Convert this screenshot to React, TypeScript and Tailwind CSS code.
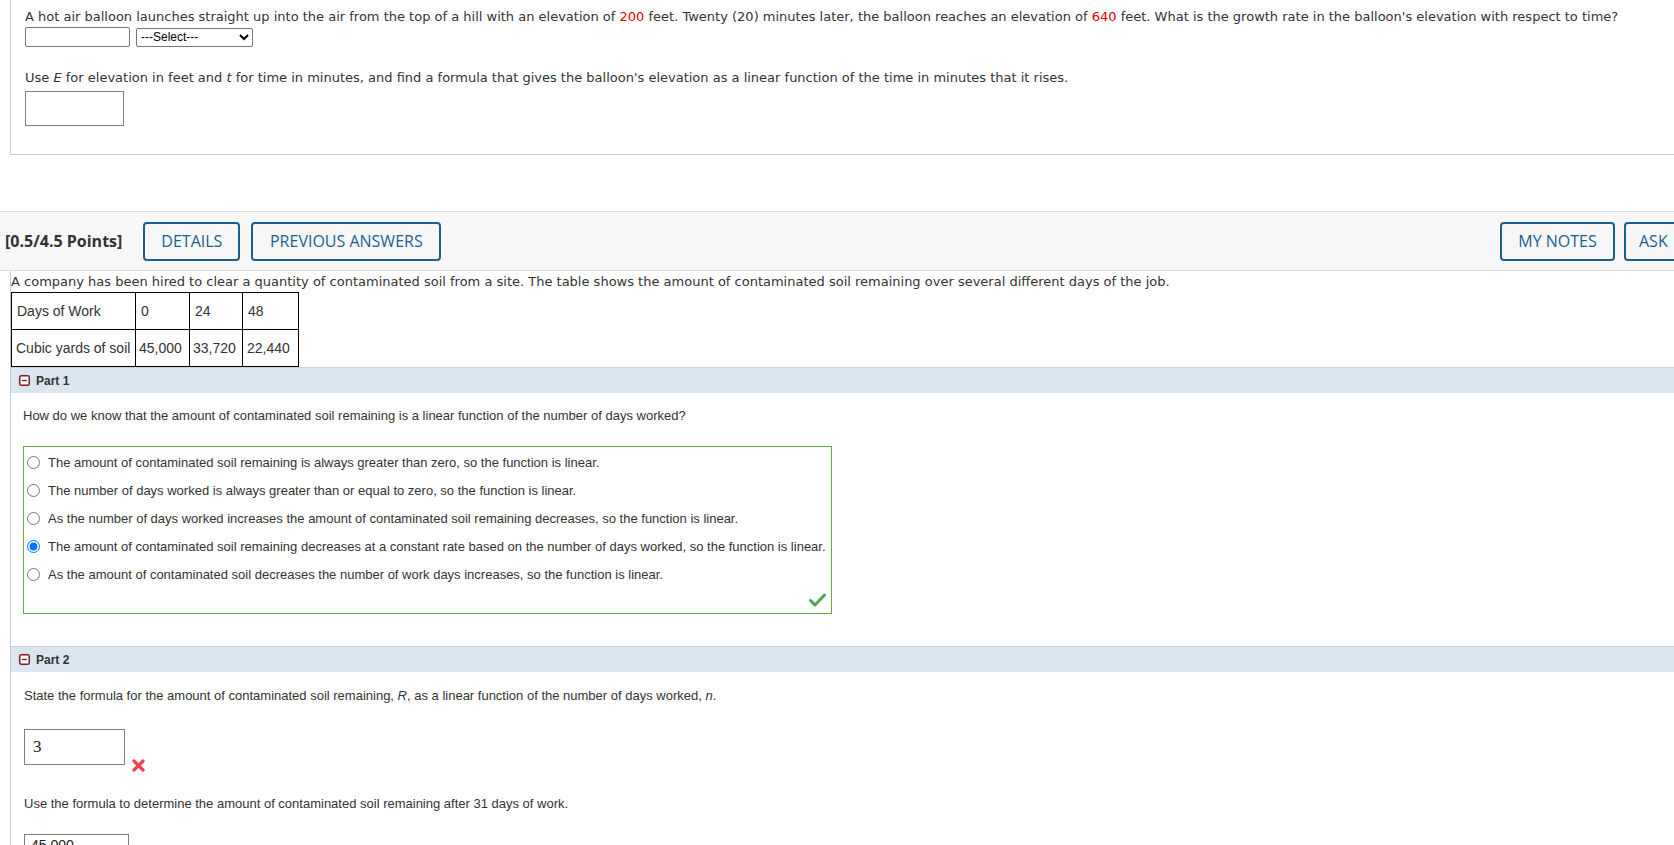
import React from 'react'

const opts = [
  'The amount of contaminated soil remaining is always greater than zero, so the function is linear.',
  'The number of days worked is always greater than or equal to zero, so the function is linear.',
  'As the number of days worked increases the amount of contaminated soil remaining decreases, so the function is linear.',
  'The amount of contaminated soil remaining decreases at a constant rate based on the number of days worked, so the function is linear.',
  'As the amount of contaminated soil decreases the number of work days increases, so the function is linear.',
]

function MinusBox() {
  return (
    <svg width="11" height="11" viewBox="0 0 11 11" className="shrink-0">
      <rect x="0.75" y="0.75" width="9.5" height="9.5" rx="1.5" fill="#fff" stroke="#8a1c1c" strokeWidth="1.5" />
      <rect x="3" y="4.8" width="5" height="1.4" fill="#8a1c1c" />
    </svg>
  )
}

function RedX() {
  return (
    <svg width="15" height="15" viewBox="0 0 15 15">
      <path d="M3 3 L12 12 M12 3 L3 12" stroke="#f0454f" strokeWidth="3.2" strokeLinecap="round" />
    </svg>
  )
}

function Check() {
  return (
    <svg width="17" height="14" viewBox="0 0 17 14">
      <path d="M1.5 7.5 L6 12 L15.5 2" fill="none" stroke="#4fa64a" strokeWidth="3" strokeLinejoin="round" strokeLinecap="round" />
    </svg>
  )
}

function PartHeader({ label }: { label: string }) {
  return (
    <div className="h-[26px] border-t border-[#cfcfcf] bg-[#dae5ef] flex items-center gap-[6px] pl-[8px] text-[12px] font-bold text-[#333] font-['Liberation_Sans',Arial,sans-serif]">
      <MinusBox />
      <span>{label}</span>
    </div>
  )
}

export default function App() {
  const body = "font-['DejaVu_Sans',Verdana,sans-serif] text-[13px] text-[#333]"
  const arial = "font-['Liberation_Sans',Arial,sans-serif] text-[13px] text-[#333]"
  const btn = 'h-[39px] border-2 border-[#1b5f92] rounded-[4px] text-[#1b5f92] text-[16px] bg-[#f7f7f7]'
  return (
    <div className="w-[1674px] h-[845px] overflow-hidden bg-white">
      {/* first question */}
      <div className={`ml-[10px] h-[155px] border-l border-b border-[#cccccc] pl-[14px] pt-[9px] ${body}`}>
        <p className="leading-[16px] whitespace-nowrap">
          A hot air balloon launches straight up into the air from the top of a hill with an elevation of{' '}
          <span className="text-[#e00000]">200</span> feet. Twenty (20) minutes later, the balloon reaches an elevation of{' '}
          <span className="text-[#e00000]">640</span> feet. What is the growth rate in the balloon's elevation with respect to time?
        </p>
        <div className="flex items-center gap-[6px] mt-[2px]">
          <input readOnly className="w-[105px] h-[20px] border border-[#767676] rounded-[2px] bg-white" />
          <select className="w-[117px] h-[19px] border border-[#767676] rounded-[2px] text-[12px] font-['Liberation_Sans',Arial,sans-serif] text-black bg-white">
            <option>---Select---</option>
          </select>
        </div>
        <p className="leading-[16px] mt-[23px]">
          Use <i>E</i> for elevation in feet and <i>t</i> for time in minutes, and find a formula that gives the balloon's elevation as a linear function of the time in minutes that it rises.
        </p>
        <input readOnly className="block mt-[5px] w-[99px] h-[35px] border border-[#808080] bg-white" />
      </div>

      <div className="h-[56px]" />

      {/* toolbar */}
      <div className="h-[60px] border-y border-[#dddddd] bg-[#f7f7f7] flex items-center pl-[5px] font-['Open_Sans',sans-serif]">
        <span className="text-[16px] font-bold text-[#333] mr-[21px]">[0.5/4.5 Points]</span>
        <button className={`${btn} w-[97px] mr-[11px]`}>DETAILS</button>
        <button className={`${btn} w-[190px]`}>PREVIOUS ANSWERS</button>
        <div className="flex-1" />
        <button className={`${btn} w-[115px] mr-[9px]`}>MY NOTES</button>
        <button className={`${btn} w-[60px] -mr-[10px] text-left pl-[13px]`}>ASK</button>
      </div>

      {/* second question */}
      <div className="ml-[10px] border-l border-[#cccccc]">
        <p className={`${body} leading-[20px] pt-[1px]`}>
          A company has been hired to clear a quantity of contaminated soil from a site. The table shows the amount of contaminated soil remaining over several different days of the job.
        </p>
        <table className="border-collapse table-fixed w-[287px] font-['Liberation_Sans',Arial,sans-serif] text-[14px] text-[#333]">
          <colgroup>
            <col className="w-[124px]" />
            <col className="w-[54px]" />
            <col className="w-[53px]" />
            <col className="w-[56px]" />
          </colgroup>
          <tbody>
            <tr className="h-[37px]">
              <td className="border border-black pl-[5px]">Days of Work</td>
              <td className="border border-black pl-[5px]">0</td>
              <td className="border border-black pl-[5px]">24</td>
              <td className="border border-black pl-[5px]">48</td>
            </tr>
            <tr className="h-[37px]">
              <td className="border border-black pl-[4px] whitespace-nowrap">Cubic yards of soil</td>
              <td className="border border-black pl-[3px]">45,000</td>
              <td className="border border-black pl-[3px]">33,720</td>
              <td className="border border-black pl-[4px]">22,440</td>
            </tr>
          </tbody>
        </table>

        <PartHeader label="Part 1" />
        <div className={`${arial} pl-[12px]`}>
          <p className="pt-[15px] leading-[15px]">
            How do we know that the amount of contaminated soil remaining is a linear function of the number of days worked?
          </p>
          <div className="mt-[23px] w-[809px] h-[168px] border border-[#66aa44] relative pt-[1px]">
            {opts.map((o, i) => (
              <label key={i} className="flex items-center h-[28px] leading-none">
                <input type="radio" name="p1" readOnly checked={i === 3} className="w-[13px] h-[13px] ml-[3px] mr-[8px]" />
                <span>{o}</span>
              </label>
            ))}
            <div className="absolute right-[5px] bottom-[6px]">
              <Check />
            </div>
          </div>
        </div>

        <div className="h-[32px]" />
        <PartHeader label="Part 2" />
        <div className={`${arial} pl-[13px]`}>
          <p className="pt-[16px] leading-[15px]">
            State the formula for the amount of contaminated soil remaining, <i>R</i>, as a linear function of the number of days worked, <i>n</i>.
          </p>
          <div className="flex items-end gap-[6px] mt-[26px]">
            <div className="w-[101px] h-[36px] border border-[#808080] flex items-center pl-[8px] font-['Liberation_Serif',serif] text-[17px] text-[#222]">3</div>
            <div className="-mb-[8px]">
              <RedX />
            </div>
          </div>
          <p className="mt-[31px] leading-[15px]">
            Use the formula to determine the amount of contaminated soil remaining after 31 days of work.
          </p>
          <div className="flex items-end gap-[6px] mt-[23px]">
            <div className="w-[105px] h-[30px] border border-[#808080] pl-[6px] pt-[3px] font-['Liberation_Sans',sans-serif] text-[14px] text-[#222] leading-[14px]">45,000</div>
            <div className="-mb-[4px]">
              <RedX />
            </div>
          </div>
        </div>
      </div>
    </div>
  )
}
